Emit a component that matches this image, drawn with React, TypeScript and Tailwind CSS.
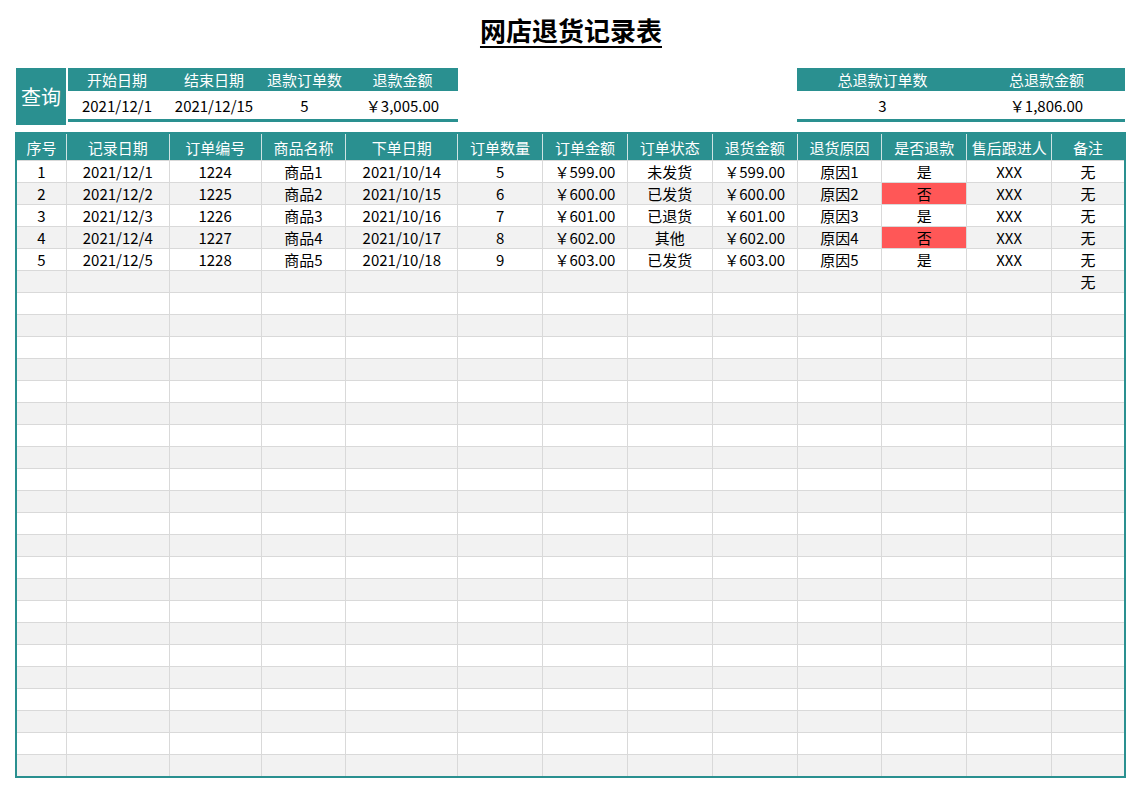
import React from "react";

const T = "bg-[#2a9090]";
const cols = [50, 103, 92, 85, 112, 85, 85, 85, 85, 85, 85, 85, 72];
const heads = ["序号","记录日期","订单编号","商品名称","下单日期","订单数量","订单金额","订单状态","退货金额","退货原因","是否退款","售后跟进人","备注"];
const status = ["未发货","已发货","已退货","其他","已发货"];
const data = [0,1,2,3,4].map(i => [
  String(i+1), `2021/12/${i+1}`, String(1224+i), `商品${i+1}`, `2021/10/${14+i}`, String(5+i),
  `￥${599+i}.00`, status[i], `￥${599+i}.00`, `原因${i+1}`, i%2 ? "否" : "是", "XXX", "无"]);

export default function App() {
  const rows: string[][] = [];
  for (let r = 0; r < 28; r++) {
    if (r < 5) rows.push(data[r]);
    else rows.push(cols.map((_, c) => (r === 5 && c === 12 ? "无" : "")));
  }
  return (
    <div className="w-[1142px] h-[793px] bg-white text-[15px] text-black" style={{ fontFamily: '"Noto Sans CJK SC", "Noto Sans", sans-serif' }}>
      <div className="h-[60px] flex items-center justify-center">
        <span className="text-[26px] font-bold underline underline-offset-[5px] leading-none">网店退货记录表</span>
      </div>
      <div className="flex h-[66px] pl-[16px] pt-[8px]">
        <div className={`${T} w-[50px] h-[57px] text-white text-[20px] flex items-center justify-center`}>查询</div>
        <div className="ml-[2px] w-[390px] flex flex-col">
          <div className={`${T} h-[23px] flex text-white`}>
            {[["开始日期",98],["结束日期",96],["退款订单数",85],["退款金额",111]].map(([t,w]) => (
              <div key={t as string} style={{ width: w as number }} className="flex items-center justify-center leading-none whitespace-nowrap">{t}</div>
            ))}
          </div>
          <div className="h-[31px] flex border-b-[3px] border-[#2a9090]">
            {[["2021/12/1",98],["2021/12/15",96],["5",85],["￥3,005.00",111]].map(([t,w]) => (
              <div key={t as string} style={{ width: w as number }} className="flex items-center justify-center leading-none">{t}</div>
            ))}
          </div>
        </div>
        <div className="ml-[339px] w-[328px] flex flex-col">
          <div className={`${T} h-[23px] flex text-white`}>
            <div className="w-[171px] flex items-center justify-center leading-none">总退款订单数</div>
            <div className="flex-1 flex items-center justify-center leading-none">总退款金额</div>
          </div>
          <div className="h-[31px] flex border-b-[3px] border-[#2a9090]">
            <div className="w-[171px] flex items-center justify-center leading-none">3</div>
            <div className="flex-1 flex items-center justify-center leading-none">￥1,806.00</div>
          </div>
        </div>
      </div>
      <div className="ml-[15px] mt-[6px] w-[1111px] border-2 border-[#2a9090]">
        <div className={`${T} flex h-[26px] text-white`}>
          {heads.map((h, i) => (
            <div key={h} style={{ width: cols[i] }} className={`flex items-center justify-center leading-none whitespace-nowrap ${i < 12 ? "border-r border-[#cfe3e3]" : ""}`}>{h}</div>
          ))}
        </div>
        {rows.map((row, r) => (
          <div key={r} className={`flex h-[22px] border-t border-[#d9d9d9] ${r % 2 ? "bg-[#f2f2f2]" : "bg-white"}`}>
            {row.map((v, c) => (
              <div key={c} style={{ width: cols[c] }} className={`flex items-center justify-center leading-none ${c < 12 ? "border-r border-[#d9d9d9]" : ""} ${c === 10 && v === "否" ? "bg-[#ff5757]" : ""}`}>{v}</div>
            ))}
          </div>
        ))}
      </div>
    </div>
  );
}
